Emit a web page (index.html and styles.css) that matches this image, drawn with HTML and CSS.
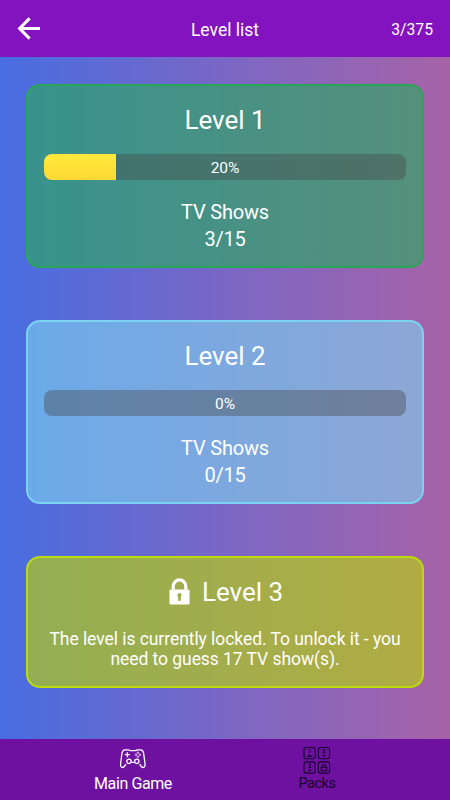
FILE: index.html
```html
<!DOCTYPE html>
<html lang="en">

<head>
  <meta charset="UTF-8" />
  <meta name="viewport" content="width=device-width, initial-scale=1.0" />
  <title>Level list</title>
  <link rel="stylesheet" href="styles.css">
</head>

<body>
  <header class="header">
    <button class="back-button" aria-label="Back">
      <svg class="back-icon" viewBox="0 0 24 24">
        <path d="M12.6 1.4 L2.6 11.5 L12.6 21.6 M2.6 11.5 H23" />
      </svg>
    </button>
    <h1 class="header-title">Level list</h1>
    <p class="header-score">3/375</p>
  </header>

  <main class="levels">
    <section class="level level-green">
      <h2 class="level-title">Level 1</h2>
      <div class="progress">
        <div class="progress-fill" style="width: 20%"></div>
        <p class="progress-text">20%</p>
      </div>
      <p class="level-count">TV Shows<br>3/15</p>
    </section>

    <section class="level level-blue">
      <h2 class="level-title">Level 2</h2>
      <div class="progress">
        <div class="progress-fill" style="width: 0%"></div>
        <p class="progress-text">0%</p>
      </div>
      <p class="level-count">TV Shows<br>0/15</p>
    </section>

    <section class="level level-locked">
      <h2 class="level-title">
        <svg class="lock-icon" viewBox="0 0 22 28">
          <path class="lock-shackle" d="M4.4 12 V8.5 A6.6 6.6 0 0 1 17.6 8.5 V12" />
          <path fill-rule="evenodd" d="M1.8 11.8 H20.2 Q21.5 11.8 21.5 13.1 V26.2 Q21.5 27.5 20.2 27.5 H1.8 Q.5 27.5 .5 26.2 V13.1 Q.5 11.8 1.8 11.8 Z M11 15.6 A2.4 2.4 0 0 0 9.6 19.8 V23.2 Q9.6 24 11 24 Q12.4 24 12.4 23.2 V19.8 A2.4 2.4 0 0 0 11 15.6 Z" />
        </svg>
        Level 3
      </h2>
      <p class="level-message">The level is currently locked. To unlock it - you need to guess 17 TV show(s).</p>
    </section>
  </main>

  <nav class="tabs">
    <a class="tab tab-active">
      <svg class="tab-icon gamepad-icon" viewBox="0 0 28 28">
        <path d="M6 3.8 H9.5 L11 4.6 H16.6 L18.2 3.8 H21.5 Q24 4 24.6 7 L26 17.5 Q26.4 21.5 23.9 21.5 Q22.6 21.5 20.6 18.2 M7 18.2 Q5 21.5 3.7 21.5 Q1.2 21.5 1.6 17.5 L3 7 Q3.6 4 6 3.8 M12.4 16.3 H15.4" />
        <path d="M8.3 6.2 V11.2 M5.8 8.7 H10.8" />
        <circle class="pad-stick" cx="10" cy="15.3" r="2.2" />
        <circle class="pad-stick" cx="17.8" cy="15.3" r="2.2" />
        <circle class="pad-dot" cx="18.9" cy="6.7" r="0.8" />
        <circle class="pad-dot" cx="18.9" cy="10.7" r="0.8" />
        <circle class="pad-dot" cx="16.9" cy="8.7" r="0.8" />
        <circle class="pad-dot" cx="20.9" cy="8.7" r="0.8" />
      </svg>
      <span>Main Game</span>
    </a>
    <a class="tab tab-packs">
      <svg class="tab-icon packs-icon" viewBox="0 0 28 28">
        <rect x="1" y="1.5" width="11.2" height="11.2" rx="2.2" />
        <rect x="15.4" y="1.5" width="11.2" height="11.2" rx="2.2" />
        <rect x="1" y="15.9" width="11.2" height="11.2" rx="2.2" />
        <rect x="15.4" y="15.9" width="11.2" height="11.2" rx="2.2" />
        <path d="M6 4.3 L6.8 3.8 V7 M5.2 10.4 L6.6 9 L8 10.4 Z" />
        <path d="M19.8 4.1 H21.8 L20 6.8 H22.2 M19.6 9.6 H22.6 M21 8.8 V10.8" />
        <path d="M5.5 18.4 H7.5 L6.5 19.9 L7.5 21.4 H5.5 M5 24.2 H8.2 M6.6 23.2 V25.4" />
        <path d="M18.2 21.2 H23.8 V24.8 H18.2 Z M19.4 21.2 V20.1 A1.6 1.6 0 0 1 22.6 20.1 V21.2" />
      </svg>
      <span>Packs</span>
    </a>
  </nav>
</body>

</html>
```

FILE: styles.css
```css
* {
  box-sizing: border-box;
}

h1,
h2,
p {
  margin: 0;
  font-weight: 400;
}

body {
  height: 100vh;
  margin: 0;
  display: flex;
  flex-direction: column;
  overflow: hidden;
  font-family: Roboto, Arial, sans-serif;
  color: white;
  background: linear-gradient(to right, #476de1, #7a67c5 50%, #a763a7);
}

/* Header */
.header {
  height: 57px;
  padding: 2px 17px 0;
  display: grid;
  grid-template-columns: 1fr auto 1fr;
  align-items: center;
  background-color: #8313be;
}

.back-button {
  width: 24px;
  height: 24px;
  margin-bottom: 1px;
  padding: 0;
  border: none;
  background: none;
}

.back-icon {
  display: block;
  width: 24px;
  height: 24px;
  fill: none;
  stroke: white;
  stroke-width: 3;
}

.header-title {
  font-size: 17.5px;
}

.header-score {
  font-size: 15.7px;
  text-align: right;
}

/* Level cards */
.levels {
  flex: 1;
  padding: 26.5px 26px 0;
  display: flex;
  flex-direction: column;
  gap: 52px;
}

.level {
  height: 184.3px;
  padding: 18px 16px 0;
  border: 2px solid;
  border-radius: 14px;
  text-align: center;
}

.level-green {
  border-color: #28a657;
  background-color: rgba(46, 167, 99, 0.66);
}

.level-blue {
  border-color: #7ad3f2;
  background-color: rgba(126, 211, 240, 0.6);
}

.level-locked {
  height: 132px;
  border-color: #bddb0b;
  background-color: rgba(184, 210, 12, 0.66);
}

.level-title {
  height: 32px;
  display: flex;
  align-items: center;
  justify-content: center;
  gap: 12px;
  font-size: 26px;
}

/* Progress bar */
.progress {
  height: 26.5px;
  margin-top: 18px;
  display: grid;
  align-items: center;
  border-radius: 8px;
  overflow: hidden;
  background-color: rgba(70, 70, 70, 0.4);
}

.progress-fill,
.progress-text {
  grid-area: 1 / 1;
}

.progress-fill {
  height: 100%;
  background: linear-gradient(#ffe93b, #fdd835);
}

.progress-text {
  padding-top: 2px;
  font-size: 15.5px;
  letter-spacing: -0.1px;
}

.level-count {
  margin-top: 19px;
  font-size: 20px;
  line-height: 26.5px;
  letter-spacing: -0.2px;
}

/* Locked level */
.level-locked .level-title {
  padding-left: 2px;
}

.lock-icon {
  width: 21px;
  height: 27px;
  margin-bottom: 2px;
  fill: white;
}

.lock-shackle {
  fill: none;
  stroke: white;
  stroke-width: 3.4;
}

.level-message {
  margin-top: 20.5px;
  font-size: 17.5px;
  line-height: 20.5px;
  letter-spacing: -0.06px;
}

/* Bottom tabs */
.tabs {
  height: 61px;
  padding: 0 41px;
  display: flex;
  background-color: #6e11a0;
}

.tab {
  flex: 1;
  padding-top: 7px;
  display: flex;
  flex-direction: column;
  align-items: center;
  font-size: 16px;
  line-height: 20px;
  letter-spacing: -0.4px;
}

.tab-icon {
  width: 28px;
  height: 28px;
  fill: none;
  stroke: currentColor;
}

.tab-packs {
  color: #17052b;
  font-size: 14.5px;
  letter-spacing: -0.5px;
}

.gamepad-icon {
  stroke-width: 1.3;
}

.pad-dot {
  stroke-width: 0.7;
}

.packs-icon {
  stroke-width: 1.1;
}
```
